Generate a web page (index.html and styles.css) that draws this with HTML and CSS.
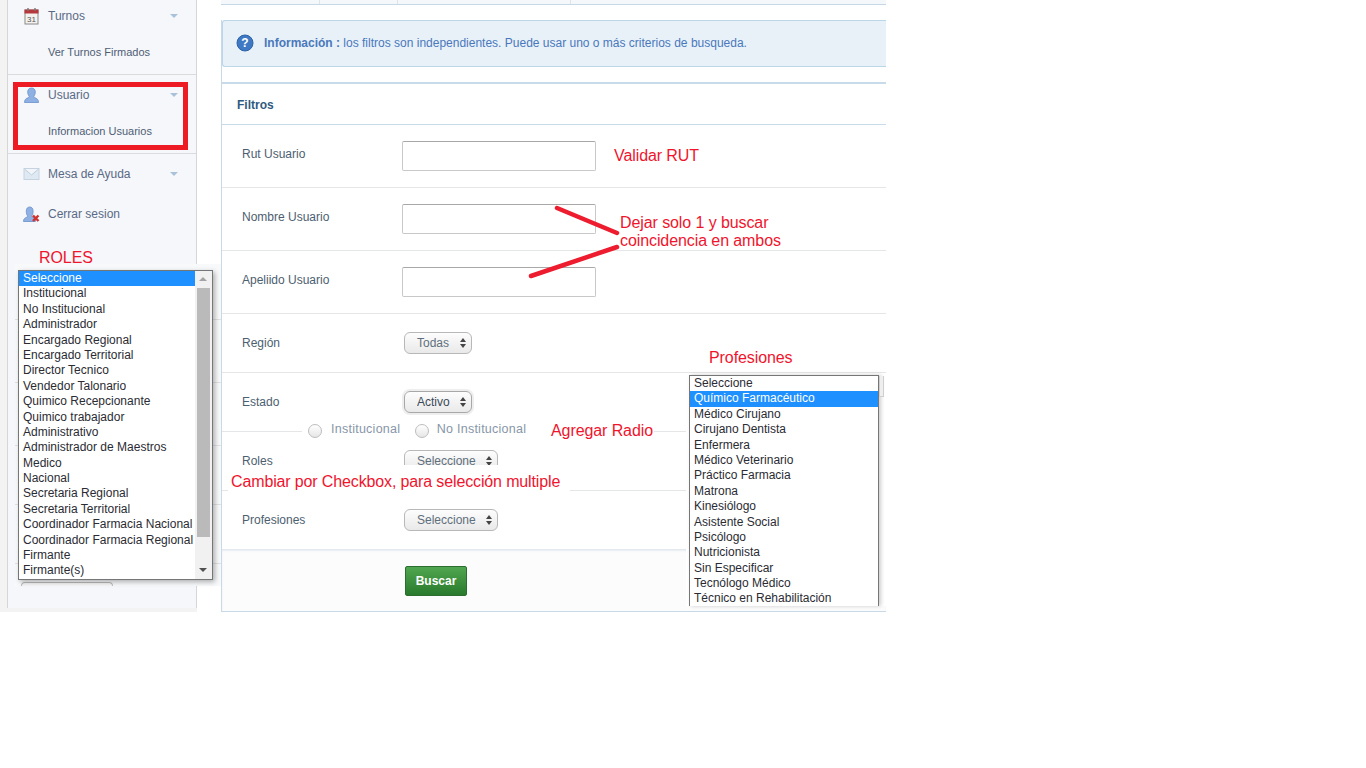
FILE: index.html
```html
<!DOCTYPE html>
<html lang="en">
<head>
  <meta charset="UTF-8" />
  <title>Filtros</title>
  <link rel="stylesheet" href="styles.css">
</head>
<body>
  <div class="shot">
    <aside class="sidebar">
      <nav class="nav">
        <div class="nav-group nav-group-first">
          <div class="nav-item">
            <svg class="nav-icon" width="16" height="18" viewBox="0 0 16 18"><rect x="1.5" y="3" width="13" height="14" fill="#f4f2ee" stroke="#8a8a8a"/><rect x="1" y="2.5" width="14" height="4" fill="#b5393c"/><path d="M4.5 1v3M11.5 1v3" stroke="#777" stroke-width="1.4"/><text x="8" y="14.5" text-anchor="middle" font-size="8" font-family="Liberation Sans" fill="#555">31</text></svg>
            <span class="nav-label">Turnos</span><i class="caret"></i>
          </div>
          <div class="nav-sub">Ver Turnos Firmados</div>
        </div>
        <div class="nav-group">
          <div class="nav-item">
            <svg class="nav-icon" width="16" height="18" viewBox="0 0 16 18"><path d="M1 16.5c0-3 1.600-4 3.500-4.700 1-.4 1.300-1 1-1.800C4.700 9 4.200 7.700 4.200 6 4.200 3.500 5.700 2 8 2s3.800 1.500 3.800 4c0 1.700-.5 3-1.300 4-.3.800 0 1.400 1 1.800 1.900.7 3.500 1.700 3.500 4.700z" fill="#8fb0e2" stroke="#6a90cc" stroke-width=".8"/></svg>
            <span class="nav-label">Usuario</span><i class="caret"></i>
          </div>
          <div class="nav-sub">Informacion Usuarios</div>
        </div>
        <div class="nav-group nav-group-last">
          <div class="nav-item">
            <svg class="nav-icon" width="16" height="18" viewBox="0 0 16 18"><rect x="0.500" y="3.500" width="15" height="11" fill="#dfe9f3" stroke="#c5d3e0"/><path d="M1 4l7 6 7-6" fill="#f1f5f9" stroke="#c0cedb"/></svg>
            <span class="nav-label">Mesa de Ayuda</span><i class="caret"></i>
          </div>
          <div class="nav-item">
            <svg class="nav-icon" width="17" height="18" viewBox="0 0 17 18"><path d="M0.500 16.500c0-2.600 1.400-3.500 3-4.200 1-.4 1.200-1 .9-1.700C3.700 9.700 3.300 8.500 3.300 6 3.300 3.400 4.700 2 6.700 2s3.400 1.400 3.400 4c0 2.500-.4 3.700-1.100 4.600-.3.700 0 1.300.9 1.700 1 .5 2 1 2.500 2v2.200z" fill="#8fb0e2" stroke="#6a90cc" stroke-width=".8"/><path d="M10 10.500l5.500 5.500M15.500 10.500L10 16" stroke="#d0322f" stroke-width="2.400"/></svg>
            <span class="nav-label">Cerrar sesion</span>
          </div>
        </div>
      </nav>
    </aside>

    <main class="main">
      <div class="tabs"></div>
      <div class="content">
        <div class="alert">
          <svg class="alert-icon" width="18" height="18" viewBox="0 0 18 18"><circle cx="9" cy="9" r="8" fill="#3f79c4" stroke="#2d62a8"/><text x="9" y="13" text-anchor="middle" font-size="12" font-weight="700" font-family="Liberation Sans" fill="#fff">?</text></svg>
          <p><b>Información :</b> los filtros son independientes. Puede usar uno o más criterios de busqueda.</p>
        </div>

        <form class="panel">
          <div class="panel-head">Filtros</div>
          <div class="row"><label>Rut Usuario</label><input type="text" /></div>
          <div class="row"><label>Nombre Usuario</label><input type="text" /></div>
          <div class="row"><label>Apeliido Usuario</label><input type="text" /></div>
          <div class="row row-select"><label>Región</label><span class="select select-sm"><select><option>Todas</option></select></span></div>
          <div class="row row-select"><label>Estado</label><span class="select select-sm select-focus"><select><option>Activo</option></select></span></div>
          <div class="row row-select"><label>Roles</label><span class="select"><select><option>Seleccione</option></select></span></div>
          <div class="row row-select row-last"><label>Profesiones</label><span class="select"><select><option>Seleccione</option></select></span></div>
          <div class="panel-foot"><button type="button" class="btn-buscar">Buscar</button></div>
        </form>
      </div>
    </main>

    <!-- marcas pegadas encima de la captura -->
    <div class="mark-box"></div>
    <div class="note note-roles">ROLES</div>
    <div class="note note-rut">Validar RUT</div>
    <div class="note note-dejar">Dejar solo 1 y buscar<br>coincidencia en ambos</div>
    <svg class="note-lines" width="886" height="612" viewBox="0 0 886 612"><path d="M557 208L617 233M531 276L617 247" stroke="#ed1c2e" stroke-width="4.500" stroke-linecap="round" fill="none"/></svg>
    <div class="note note-prof">Profesiones</div>

    <div class="patch-radio">
      <span class="radio"></span><span class="radio-text">Institucional</span>
      <span class="radio"></span><span class="radio-text">No Institucional</span>
    </div>
    <div class="note note-radio">Agregar Radio</div>
    <div class="patch-check">Cambiar por Checkbox, para selección multiple</div>

    <div class="roles-wrap">
      <div class="peek"></div>
      <div class="listbox roles-box">
        <ul class="options">
          <li class="sel">Seleccione</li>
          <li>Institucional</li>
          <li>No Institucional</li>
          <li>Administrador</li>
          <li>Encargado Regional</li>
          <li>Encargado Territorial</li>
          <li>Director Tecnico</li>
          <li>Vendedor Talonario</li>
          <li>Quimico Recepcionante</li>
          <li>Quimico trabajador</li>
          <li>Administrativo</li>
          <li>Administrador de Maestros</li>
          <li>Medico</li>
          <li>Nacional</li>
          <li>Secretaria Regional</li>
          <li>Secretaria Territorial</li>
          <li>Coordinador Farmacia Nacional</li>
          <li>Coordinador Farmacia Regional</li>
          <li>Firmante</li>
          <li>Firmante(s)</li>
        </ul>
        <div class="scroll">
          <i class="arrow-up"></i>
          <div class="thumb"></div>
          <i class="arrow-down"></i>
        </div>
      </div>
    </div>

    <div class="prof-wrap">
      <div class="listbox prof-box">
        <ul class="options">
          <li>Seleccione</li>
          <li class="sel">Químico Farmacéutico</li>
          <li>Médico Cirujano</li>
          <li>Cirujano Dentista</li>
          <li>Enfermera</li>
          <li>Médico Veterinario</li>
          <li>Práctico Farmacia</li>
          <li>Matrona</li>
          <li>Kinesiólogo</li>
          <li>Asistente Social</li>
          <li>Psicólogo</li>
          <li>Nutricionista</li>
          <li>Sin Especificar</li>
          <li>Tecnólogo Médico</li>
          <li>Técnico en Rehabilitación</li>
        </ul>
      </div>
      <div class="prof-sliver"></div>
    </div>
  </div>
</body>
</html>
```

FILE: styles.css
```css
* {
  box-sizing: border-box;
}
body {
  margin: 0;
  background: #fff;
  font-family: "Liberation Sans", Arial, sans-serif;
  font-size: 12px;
  color: #333;
}
.shot {
  position: relative;
  display: flex;
  width: 886px;
  height: 612px;
  overflow: hidden;
  background: #fff;
}

/* sidebar */
.sidebar {
  flex: 0 0 197px;
  padding-left: 7px;
  background: #f3f3f3;
}
.nav {
  height: 100%;
  background: #f5f7fa;
  border-left: 1px solid #d6d6d6;
  border-right: 1px solid #d6d6d6;
}
.nav-group {
  padding-bottom: 6px;
  border-bottom: 1px solid #d9dbdd;
}
.nav-group-first {
  margin-top: -4px;
}
.nav-group-last {
  border-bottom: none;
}
.nav-item {
  display: flex;
  align-items: center;
  height: 40px;
  padding-left: 15px;
}
.nav-icon {
  flex: none;
  width: 17px;
  margin-right: 8px;
}
.nav-label {
  flex: 1;
  color: #5a6a85;
}
.caret {
  width: 0;
  height: 0;
  margin-right: 18px;
  border-left: 4.500px solid transparent;
  border-right: 4.500px solid transparent;
  border-top: 4px solid #a9c1d9;
}
.nav-sub {
  height: 32px;
  padding-left: 40px;
  line-height: 32px;
  font-size: 11px;
  color: #4f5d75;
}

/* main */
.main {
  flex: 1;
  min-width: 0;
  padding-left: 24px;
}
.tabs {
  height: 5px;
  border-bottom: 1px solid #c6d8e8;
  background:
    linear-gradient(#dfe4e8, #dfe4e8) 98px 0/1px 100% no-repeat,
    linear-gradient(#dfe4e8, #dfe4e8) 176px 0/1px 100% no-repeat,
    linear-gradient(#dfe4e8, #dfe4e8) 349px 0/1px 100% no-repeat,
    #f5f8fa;
}
.content {
  margin-top: 15px;
  border-left: 1px solid #c9d9e6;
}
.alert {
  display: flex;
  align-items: center;
  height: 47px;
  padding: 0 0 2px 13px;
  background: #e8f1f8;
  border: 1px solid #bcd6e8;
  border-right: none;
  border-radius: 3px 0 0 3px;
  color: #4a78bc;
}
.alert p {
  margin: 0 0 0 10px;
}
.alert b {
  color: #4a78bc;
}
.panel {
  height: 530px;
  margin-top: 15px;
  border-top: 2px solid #c9dbe9;
  border-bottom: 1px solid #c9d9e6;
}
.panel-head {
  height: 41px;
  padding-left: 15px;
  border-bottom: 1px solid #c7dbe9;
  line-height: 42px;
  font-weight: 700;
  color: #2f5a80;
}
.row {
  display: flex;
  align-items: center;
  height: 63px;
  padding-left: 20px;
  border-bottom: 1px solid #e4e6e8;
}
.row-select {
  height: 59px;
}
.row-last {
  height: 58px;
  border-bottom: none;
}
.row label {
  flex: 0 0 160px;
  margin-top: -4px;
  color: #4d6070;
}
.row-select label {
  margin-top: 0;
}
.row input {
  width: 194px;
  height: 30px;
  background: #fff;
  border: 1px solid #c8c8c8;
  border-top-color: #a8a8a8;
  border-radius: 2px;
}
.select {
  position: relative;
  display: inline-block;
  width: 94px;
  height: 22px;
  margin-left: 2px;
}
.select-sm {
  width: 68px;
}
.select-focus {
  border-radius: 6px;
  box-shadow: 0 0 0 2px #eeeeee;
}
.select select {
  width: 100%;
  height: 100%;
  padding: 0 0 0 12px;
  appearance: none;
  border: 1px solid #b8b8b8;
  border-radius: 6px;
  background: linear-gradient(#fdfdfd, #e9e9e9);
  font: 12px "Liberation Sans", Arial, sans-serif;
  color: #5f6f7c;
}
.select-focus select {
  color: #3a4a58;
  border-color: #a8a8a8;
}
.select::before,
.select::after {
  content: "";
  position: absolute;
  right: 6.500px;
  border-left: 3.500px solid transparent;
  border-right: 3.500px solid transparent;
}
.select::before {
  top: 6px;
  border-bottom: 4px solid #444;
}
.select::after {
  top: 12px;
  border-top: 4px solid #444;
}
.panel-foot {
  height: 62px;
  padding: 16px 0 0 183px;
  background: #fcfcfc;
  border-top: 1px solid #e3e8ed;
  box-shadow: inset 0 1px 2px #e8edf2;
}
.btn-buscar {
  width: 62px;
  height: 30px;
  padding: 0;
  background: linear-gradient(#50a650, #297a2d);
  border: 1px solid #2c6e30;
  border-radius: 2px;
  font: 700 12px "Liberation Sans", Arial, sans-serif;
  color: #fff;
}

/* annotations on top of the capture */
.mark-box {
  position: absolute;
  left: 13px;
  top: 82px;
  width: 175px;
  height: 68px;
  border: 5px solid #ed1c24;
}
.note,
.patch-check {
  font-size: 16px;
  line-height: 18px;
  color: #f0142d;
  white-space: nowrap;
  letter-spacing: -0.09px;
}
.note {
  position: absolute;
}
.note-roles {
  left: 39px;
  top: 249px;
}
.note-rut {
  left: 614px;
  top: 147px;
}
.note-dejar {
  left: 620px;
  top: 214px;
}
.note-prof {
  left: 709px;
  top: 349px;
}
.note-radio {
  left: 551px;
  top: 422px;
}
.note-lines {
  position: absolute;
  left: 0;
  top: 0;
  pointer-events: none;
}
.patch-radio {
  position: absolute;
  left: 302px;
  top: 415px;
  display: flex;
  align-items: center;
  width: 352px;
  height: 30px;
  padding-left: 6px;
  background: #fff;
}
.radio {
  width: 14px;
  height: 14px;
  margin-top: 2px;
  border: 1px solid #bdbdbd;
  border-radius: 50%;
  background: linear-gradient(#fff, #e6e6e6);
}
.radio:first-child {
  margin-right: 1px;
}
.radio-text {
  margin: 0 14.500px 2px 8px;
  font-size: 12.500px;
  letter-spacing: 0.25px;
  color: #8796a8;
}
.patch-check {
  position: absolute;
  left: 228px;
  top: 465px;
  width: 342px;
  height: 26px;
  padding: 8px 0 0 3px;
  background: #fff;
  letter-spacing: -0.135px;
}
.roles-wrap {
  position: absolute;
  left: 15px;
  top: 264px;
  width: 206px;
  height: 322px;
  background:
    linear-gradient(#e2e2e2, #e2e2e2) 0 55px/100% 1px no-repeat,
    linear-gradient(#e2e2e2, #e2e2e2) 0 118px/100% 1px no-repeat,
    linear-gradient(#e2e2e2, #e2e2e2) 0 181px/100% 1px no-repeat,
    linear-gradient(#e2e2e2, #e2e2e2) 0 240px/100% 1px no-repeat,
    linear-gradient(#e2e2e2, #e2e2e2) 0 299px/100% 1px no-repeat,
    #f8f9fa;
}
.peek {
  position: absolute;
  left: 6px;
  top: 318px;
  width: 92px;
  height: 4px;
  background: #f6f6f6;
  border: 1px solid #bbb;
  border-bottom: none;
  border-radius: 6px 6px 0 0;
}
.listbox {
  display: flex;
  position: absolute;
  background: #fff;
  border: 1px solid #767676;
  box-shadow: 2px 2px 5px rgba(0, 0, 0, 0.3);
}
.roles-box {
  left: 3px;
  top: 6px;
  width: 195px;
  height: 310px;
}
.options {
  flex: 1;
  margin: 0;
  padding: 0;
  list-style: none;
}
.options li {
  height: 15.391px;
  padding-left: 4px;
  line-height: 15px;
  color: #2b2b33;
  white-space: nowrap;
}
.options .sel {
  background: #1e90ff;
  color: #fff;
}
.scroll {
  position: relative;
  flex: 0 0 17px;
  background: #f1f1f1;
}
.thumb {
  position: absolute;
  left: 2px;
  top: 17px;
  width: 13px;
  height: 249px;
  background: #bababa;
}
.arrow-up,
.arrow-down {
  position: absolute;
  left: 4px;
  border-left: 4px solid transparent;
  border-right: 4px solid transparent;
}
.arrow-up {
  top: 6px;
  border-bottom: 4px solid #a3a3a3;
}
.arrow-down {
  bottom: 7px;
  border-top: 4px solid #505050;
}
.prof-wrap {
  position: absolute;
  left: 686px;
  top: 373px;
  width: 200px;
  height: 233px;
  background: #fff;
}
.prof-box {
  left: 3px;
  top: 2px;
  width: 190px;
  height: 231px;
  border-bottom: none;
  box-shadow: 2px 0 4px rgba(0, 0, 0, 0.2);
}
.prof-sliver {
  position: absolute;
  left: 193px;
  top: 3px;
  width: 5px;
  height: 21px;
  background: #eeeeee;
  border: 1px solid #cfcfcf;
  border-top: none;
}
```
